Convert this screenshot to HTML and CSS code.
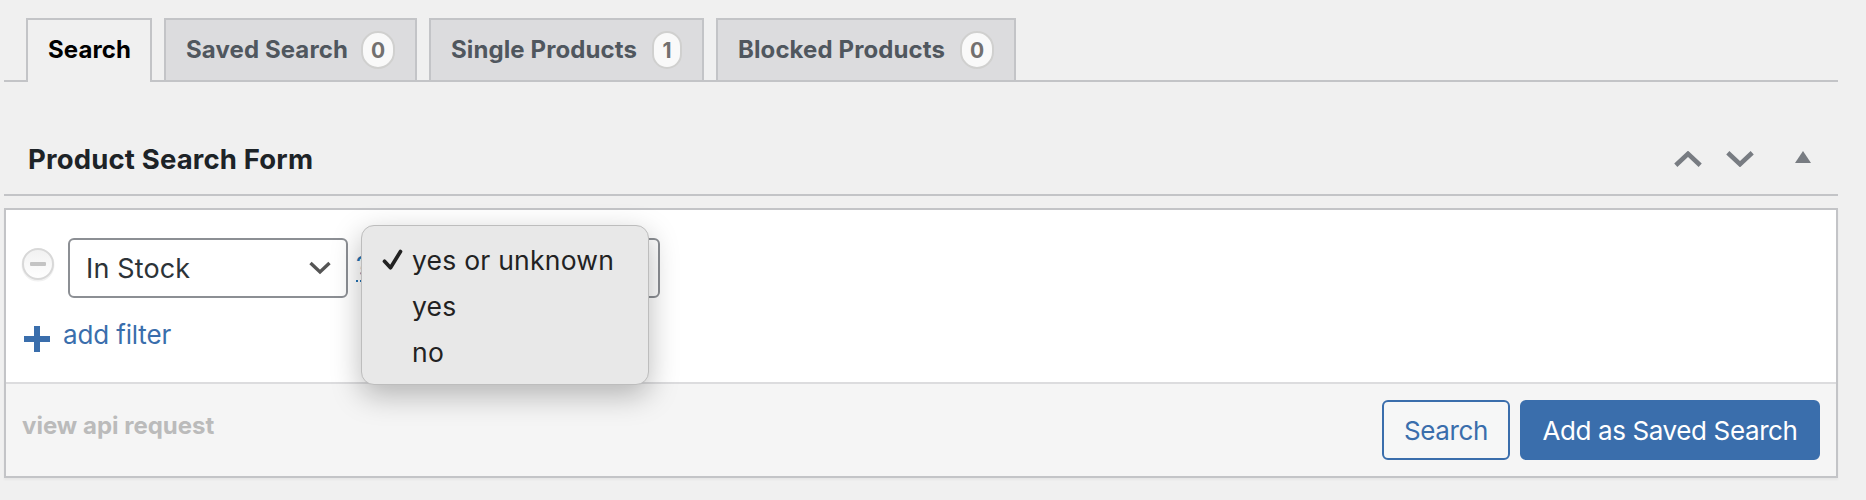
FILE: index.html
```html
<!DOCTYPE html>
<html lang="en">
<head>
<meta charset="utf-8">
<title>Product Search</title>
<link rel="stylesheet" href="styles.css">
</head>
<body>
<main class="wrap">
  <nav class="tabs">
    <a class="tab tab-active"><span>Search</span></a>
    <a class="tab tab-saved"><span>Saved Search</span><span class="count">0</span></a>
    <a class="tab tab-single"><span>Single Products</span><span class="count count-one">1</span></a>
    <a class="tab tab-blocked"><span>Blocked Products</span><span class="count">0</span></a>
  </nav>
  <header class="form-header">
    <h2 class="form-title">Product Search Form</h2>
    <div class="handles">
      <svg width="28" height="16" viewBox="0 0 28 16"><path d="M1.800 14.200 14 2.800l12.200 11.400" fill="none" stroke="#787c82" stroke-width="4.600"/></svg>
      <svg width="28" height="16" viewBox="0 0 28 16"><path d="M1.800 1.800 14 13.200 26.200 1.800" fill="none" stroke="#787c82" stroke-width="4.600"/></svg>
      <svg class="toggle" width="16" height="12" viewBox="0 0 16 12"><path d="M8 0l8 12H0z" fill="#787c82"/></svg>
    </div>
  </header>
  <section class="panel">
    <div class="filters">
      <div class="filter-row">
        <svg class="remove" width="34" height="36" viewBox="0 0 34 36">
          <defs><linearGradient id="face" x2="0" y2="1"><stop offset="0" stop-color="#f1f1f1"/><stop offset="1" stop-color="#fff"/></linearGradient></defs>
          <circle cx="17" cy="18" r="15" fill="none" stroke="#f1f1f1" stroke-width="3"/>
          <circle cx="17" cy="17" r="15" fill="url(#face)" stroke="#d8d8d8" stroke-width="2"/>
          <rect x="9" y="15" width="16" height="4" rx="1" fill="#c4c4c4"/>
        </svg>
        <div class="select select-field"><span>In Stock</span>
          <svg width="22" height="14" viewBox="0 0 22 14"><path d="M1.500 2 11 11 20.500 2" fill="none" stroke="#555" stroke-width="3.400"/></svg>
        </div>
        <span class="help">?</span>
        <div class="value">
          <div class="select select-value"></div>
          <ul class="menu">
            <li><svg class="check" width="22" height="22" viewBox="0 0 22 22"><path d="M2.500 12.300 8.500 18.700 18.500 2.500" fill="none" stroke="#222" stroke-width="3.700" stroke-linecap="round" stroke-linejoin="round"/></svg><span>yes or unknown</span></li>
            <li><span>yes</span></li>
            <li><span>no</span></li>
          </ul>
        </div>
      </div>
      <a class="add">
        <svg width="26" height="26" viewBox="0 0 26 26"><path d="M10 0h6v10h10v6H16v10h-6V16H0v-6h10z" fill="#3a6eac"/></svg>
        <span>add filter</span>
      </a>
    </div>
    <footer class="actions">
      <a class="api">view api request</a>
      <button class="button secondary">Search</button>
      <button class="button primary">Add as Saved Search</button>
    </footer>
  </section>
</main>
</body>
</html>
```
FILE: styles.css
```css
* { box-sizing: border-box; }
body { margin: 0; height: 500px; overflow: hidden; background: #f0f0f0; font-family: Inter, "Liberation Sans", sans-serif; color: #2c3338; }
.wrap { width: 1834px; margin-left: 4px; padding-top: 18px; }
.tabs { display: flex; gap: 12px; height: 64px; padding-left: 22px; border-bottom: 2px solid #c3c4c7; }
.tab { display: flex; align-items: center; height: 62px; padding: 0 0 2px 20px; border: 2px solid #c3c4c7; border-bottom: 0; background: #dcdcde; color: #50575e; font-size: 24px; font-weight: 650; letter-spacing: .1px; white-space: nowrap; }
.tab-active { width: 126px; height: 64px; padding-bottom: 4px; background: #f0f0f0; color: #000; }
.tab-saved { width: 253px; }
.tab-single { width: 275px; }
.tab-blocked { width: 300px; }
.count { display: flex; align-items: center; justify-content: center; width: 34px; height: 38px; margin: 2px 20px 0 auto; border: 2px solid #d0d0cf; border-radius: 17px; background: #f9f9f9; color: #72706f; font-size: 21px; letter-spacing: 0; }
.count-one { width: 30px; border-radius: 15px; }
.form-header { display: flex; align-items: center; justify-content: space-between; height: 114px; padding: 41px 27px 0 24px; border-bottom: 2px solid #c3c4c7; }
.form-title { margin: 1px 0 0; font-size: 27.5px; font-weight: 650; letter-spacing: .16px; line-height: 36px; color: #1d2327; }
.handles { display: flex; align-items: center; gap: 24px; }
.toggle { margin: -4px 0 0 17px; }
.panel { height: 270px; margin-top: 12px; border: 2px solid #c3c4c7; background: #fff; box-shadow: 0 2px 2px rgba(0,0,0,.04); }
.filters { height: 174px; border-bottom: 2px solid #dcdcde; padding: 28px 0 0 15px; }
.filter-row { display: flex; height: 60px; }
.remove { margin-top: 9px; }
.select { display: flex; align-items: center; justify-content: space-between; height: 60px; border: 2px solid #8c8f94; border-radius: 6px; background: #fff; }
.select-field { width: 280px; margin-left: 13px; padding: 0 15px 0 16px; font-size: 27px; letter-spacing: .15px; }
.help { align-self: flex-start; margin: 13px 0 0 8px; width: 14px; line-height: 29px; font-size: 26px; color: #2271b1; border-bottom: 2px dotted #2271b1; }
.value { position: relative; margin-left: 10px; }
.select-value { width: 280px; }
.menu { position: absolute; left: -19px; top: -13px; width: 288px; height: 160px; margin: 0; padding: 11px 0 0 20px; list-style: none; border: 1px solid #bdbdbd; border-radius: 13px; background: #e8e8e8; color: #222; box-shadow: 0 10px 30px rgba(0,0,0,.27); }
.menu li { display: flex; align-items: center; height: 46px; padding-left: 30px; font-size: 26.5px; font-weight: 430; letter-spacing: .23px; white-space: nowrap; }
.menu li:first-child { padding-left: 0; }
.check { margin-right: 8px; }
.add { display: flex; align-items: center; gap: 13px; margin: 18px 0 0 3px; color: #3a6eac; font-size: 26px; letter-spacing: -.15px; }
.add svg { margin-top: 10px; }
.actions { display: flex; align-items: center; height: 92px; padding: 0 16px; background: #f5f5f5; }
.api { flex: 1; padding-bottom: 9px; font-size: 24px; font-weight: 700; color: #bbb; }
.button { height: 60px; padding: 0; border: 2px solid #3a6eac; border-radius: 6px; font-family: inherit; font-size: 26px; font-weight: 420; letter-spacing: -.38px; white-space: nowrap; }
.secondary { width: 128px; margin-right: 10px; background: #f6f7f7; color: #3a6eac; }
.primary { width: 300px; background: #3a6eac; color: #fff; }
```
